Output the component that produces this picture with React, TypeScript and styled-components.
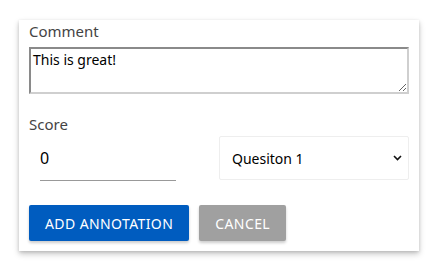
import React from "react";
import styled, { createGlobalStyle } from "styled-components";

const Global = createGlobalStyle`
  html, body { margin: 0; padding: 0; background: #ffffff; }
  body { font-family: "Noto Sans", "Open Sans", sans-serif; }
`;

const Page = styled.div`
  width: 440px;
  height: 270px;
  padding: 20px 21px 0 19px;
  box-sizing: border-box;
`;

const Card = styled.form`
  width: 400px;
  height: 231px;
  box-sizing: border-box;
  background: #ffffff;
  box-shadow: 0 3px 6px rgba(0, 0, 0, 0.22), 0 1px 3px rgba(0, 0, 0, 0.12);
  padding: 1px 10px 0 10px;
  display: flex;
  flex-direction: column;
`;

const Label = styled.label<{ $top?: number }>`
  display: block;
  font-size: 15px;
  line-height: 20px;
  color: #444444;
  margin-top: ${(p) => p.$top ?? 0}px;
`;

const TextArea = styled.textarea`
  display: block;
  margin-top: 6px;
  width: 380px;
  height: 47px;
  box-sizing: border-box;
  border-style: solid;
  border-width: 2px;
  border-color: #8a8a8a #cfcfcf #cfcfcf #8a8a8a;
  padding: 1px 2px;
  font-family: "Noto Sans", sans-serif;
  font-size: 14px;
  line-height: 19px;
  color: #000000;
  resize: vertical;
  outline: none;
`;

const Row = styled.div`
  display: flex;
  align-items: flex-start;
  margin-top: 2px;
`;

const ScoreInput = styled.input`
  margin-left: 11px;
  width: 136px;
  height: 45px;
  box-sizing: border-box;
  border: none;
  border-bottom: 1px solid #999999;
  padding: 0 0 1px 0;
  font-family: "Noto Sans", sans-serif;
  font-size: 16px;
  color: #000000;
  outline: none;
  background: transparent;
`;

const SelectWrap = styled.div`
  position: relative;
  margin-left: 43px;
  width: 190px;
  height: 44px;
`;

const Select = styled.select`
  appearance: none;
  -webkit-appearance: none;
  display: block;
  width: 100%;
  height: 100%;
  box-sizing: border-box;
  border: 1px solid #eeeeee;
  border-radius: 2px;
  background: #ffffff;
  padding: 0 24px 0 12px;
  font-family: "Noto Sans", sans-serif;
  font-size: 14px;
  color: #000000;
  outline: none;
`;

const Chevron = styled.svg`
  position: absolute;
  right: 7px;
  top: 19px;
  width: 9px;
  height: 6px;
  pointer-events: none;
`;

const Buttons = styled.div`
  display: flex;
  gap: 10px;
  margin-top: 24px;
`;

const Button = styled.button<{ $variant: "primary" | "muted" }>`
  height: 36px;
  padding: 0 16px;
  border: none;
  border-radius: 2px;
  background: ${(p) => (p.$variant === "primary" ? "#005cbf" : "#a0a0a0")};
  color: #ffffff;
  font-family: "Noto Sans", sans-serif;
  font-size: 14px;
  letter-spacing: 0.4px;
  text-transform: uppercase;
  box-shadow: 0 2px 3px rgba(0, 0, 0, 0.2);
  cursor: pointer;
`;

export default function App() {
  return (
    <>
      <Global />
      <Page>
        <Card onSubmit={(e) => e.preventDefault()}>
          <Label>Comment</Label>
          <TextArea defaultValue="This is great!" />
          <Label $top={20}>Score</Label>
          <Row>
            <ScoreInput type="text" defaultValue="0" />
            <SelectWrap>
              <Select defaultValue="q1">
                <option value="q1">Quesiton 1</option>
                <option value="q2">Quesiton 2</option>
              </Select>
              <Chevron viewBox="0 0 9 6">
                <path d="M1 1 L4.5 4.5 L8 1" fill="none" stroke="#111" strokeWidth="1.6" />
              </Chevron>
            </SelectWrap>
          </Row>
          <Buttons>
            <Button type="submit" $variant="primary">Add annotation</Button>
            <Button type="button" $variant="muted">Cancel</Button>
          </Buttons>
        </Card>
      </Page>
    </>
  );
}
